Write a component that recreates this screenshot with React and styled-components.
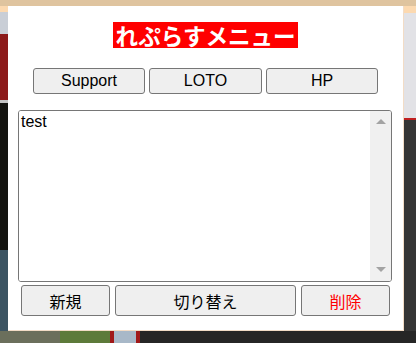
import React, { useState } from 'react';
import styled, { createGlobalStyle } from 'styled-components';

const GlobalStyle = createGlobalStyle`
    html, body {
        margin: 0;
        padding: 0;
    }
    body {
        width: 416px;
        height: 343px;
        overflow: hidden;
        font-family: "Liberation Sans", Arial, sans-serif;
        background:
            linear-gradient(#dfc49f 0 6px, transparent 6px),
            linear-gradient(90deg, transparent 0 404px, #fcd9b0 404px) 0 6px / 100% 7px no-repeat,
            linear-gradient(90deg, #fcd9b0 0 8px, transparent 8px) 0 6px / 100% 6px no-repeat,
            linear-gradient(90deg, #c9ced6 0 8px, transparent 8px) 0 12px / 100% 22px no-repeat,
            linear-gradient(90deg, #8c1a1a 0 8px, transparent 8px) 0 34px / 100% 66px no-repeat,
            linear-gradient(90deg, #c4c4c4 0 8px, transparent 8px) 0 100px / 100% 3px no-repeat,
            linear-gradient(90deg, #141410 0 8px, transparent 8px) 0 103px / 100% 147px no-repeat,
            linear-gradient(90deg, #3c5462 0 8px, transparent 8px) 0 250px / 100% 81px no-repeat,
            linear-gradient(90deg, transparent 0 404px, #e2e2e6 404px) 0 13px / 100% 105px no-repeat,
            linear-gradient(90deg, transparent 0 404px, #c02020 404px) 0 118px / 100% 2px no-repeat,
            linear-gradient(90deg, #6b6f5c 0 60px, #5d7a3a 60px 110px, #a01818 110px 114px, #a8b8c8 114px 136px, #a01818 136px 140px, #262626 140px) 0 331px / 100% 12px no-repeat,
            #353535;
    }
`;

const Panel = styled.div`
    box-sizing: border-box;
    width: 396px;
    height: 325px;
    margin: 6px 0 0 8px;
    background: #fff;
    border-right: 1px solid #f2dcc6;
    border-bottom: 1px solid #f2dcc6;
    padding: 16px 10px 0 10px;
    display: flex;
    flex-direction: column;
    align-items: center;
`;

const Title = styled.h1`
    margin: 0;
    height: 26px;
    padding: 0 3px;
    background: #ff0000;
    color: #fff;
    font-family: "Noto Sans CJK JP", sans-serif;
    font-weight: bold;
    font-size: 22.5px;
    line-height: 26px;
    white-space: nowrap;
`;

const LinkRow = styled.div`
    display: flex;
    gap: 4px;
    margin-top: 20px;
`;

const Button = styled.button`
    box-sizing: border-box;
    width: ${p => p.$w}px;
    height: ${p => p.$h}px;
    padding: 0;
    background: #efefef;
    border: 1px solid #767676;
    border-radius: 3px;
    color: ${p => (p.$danger ? '#ff0000' : '#000')};
    font-family: "Liberation Sans", "Noto Sans CJK JP", sans-serif;
    font-size: 16px;
    cursor: pointer;
`;

const MemoBox = styled.div`
    box-sizing: border-box;
    align-self: stretch;
    margin: 16px 1px 0 0;
    height: 172px;
    border: 1px solid #767676;
    border-radius: 3px;
    display: flex;
    overflow: hidden;
`;

const Memo = styled.textarea`
    flex: 1;
    border: none;
    outline: none;
    resize: none;
    margin: 0;
    padding: 2px 2px;
    font-family: "Liberation Sans", "Noto Sans CJK JP", sans-serif;
    font-size: 16px;
    line-height: 18px;
    color: #000;
    overflow: hidden;
`;

const ScrollTrack = styled.div`
    width: 21px;
    background: #f0f0f0;
    display: flex;
    flex-direction: column;
    justify-content: space-between;
    align-items: center;
    padding: 8px 0 9px;
`;

const Arrow = styled.span`
    width: 0;
    height: 0;
    border-left: 5px solid transparent;
    border-right: 5px solid transparent;
    ${p => (p.$down
        ? 'border-top: 5px solid #a3a3a3;'
        : 'border-bottom: 5px solid #a3a3a3;')}
`;

const ActionRow = styled.div`
    align-self: stretch;
    display: flex;
    gap: 5px;
    margin-top: 3px;
    padding: 0 3px;
`;

function App() {
    const [memo, setMemo] = useState('test');

    return (
        <>
            <GlobalStyle />
            <Panel>
                <Title>れぷらすメニュー</Title>
                <LinkRow>
                    <Button $w={112} $h={26}>Support</Button>
                    <Button $w={113} $h={26}>LOTO</Button>
                    <Button $w={112} $h={26}>HP</Button>
                </LinkRow>
                <MemoBox>
                    <Memo value={memo} onChange={e => setMemo(e.target.value)} />
                    <ScrollTrack>
                        <Arrow />
                        <Arrow $down />
                    </ScrollTrack>
                </MemoBox>
                <ActionRow>
                    <Button $w={89} $h={31}>新規</Button>
                    <Button $w={181} $h={31}>切り替え</Button>
                    <Button $w={89} $h={31} $danger>削除</Button>
                </ActionRow>
            </Panel>
        </>
    );
}

export default App;
